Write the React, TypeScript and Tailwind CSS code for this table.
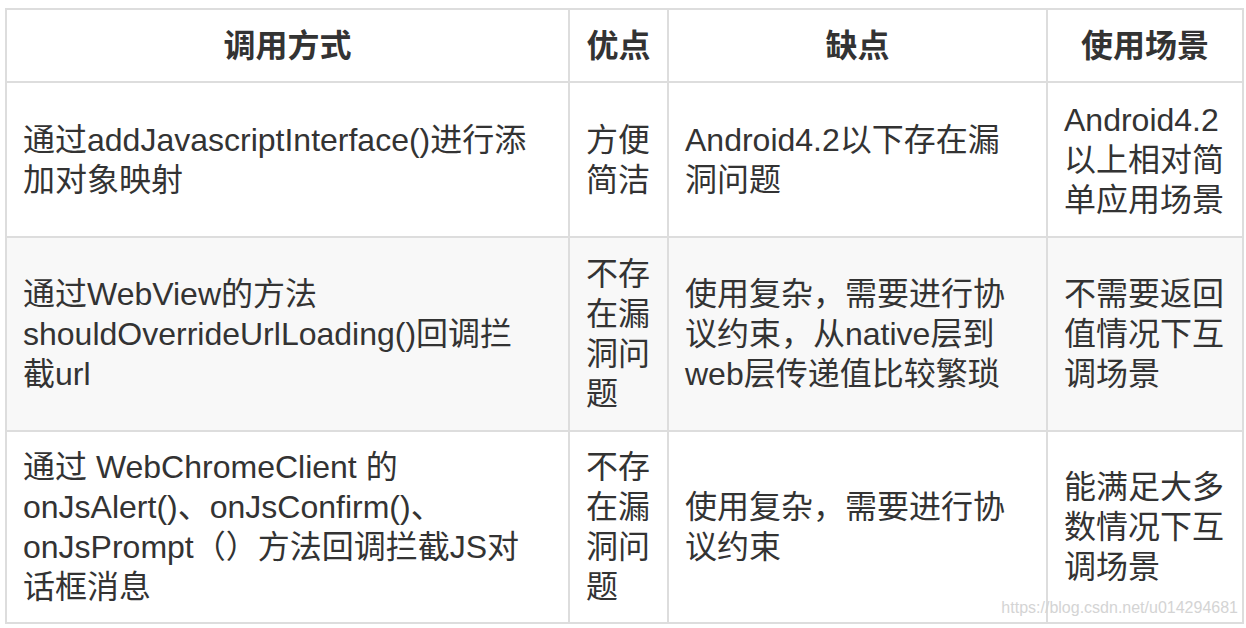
export default function App() {
  const font = { fontFamily: '"Liberation Sans", "Noto Sans CJK SC", sans-serif' };

  const cell = "border-2 border-[#dddddd] px-[16px] py-0 align-middle leading-[40px] whitespace-nowrap";

  return (
    <div className="relative h-[628px] w-[1246px] overflow-hidden bg-white" style={font}>
      <div className="pl-[5px] pt-[8px]">
        <table className="w-[1237px] table-fixed border-collapse text-[32px] text-[#333333]">
          <colgroup>
            <col className="w-[563px]" />
            <col className="w-[99px]" />
            <col className="w-[379px]" />
            <col className="w-[196px]" />
          </colgroup>
          <thead>
            <tr className="h-[73px]">
              <th className={`${cell} text-center font-bold`}>调用方式</th>
              <th className={`${cell} text-center font-bold`}>优点</th>
              <th className={`${cell} text-center font-bold`}>缺点</th>
              <th className={`${cell} text-center font-bold`}>使用场景</th>
            </tr>
          </thead>
          <tbody>
            <tr className="h-[155px]">
              <td className={cell}>
                通过addJavascriptInterface()进行添
                <br />
                加对象映射
              </td>
              <td className={cell}>
                方便
                <br />
                简洁
              </td>
              <td className={cell}>
                Android4.2以下存在漏
                <br />
                洞问题
              </td>
              <td className={cell}>
                Android4.2
                <br />
                以上相对简
                <br />
                单应用场景
              </td>
            </tr>
            <tr className="h-[194px] bg-[#f8f8f8]">
              <td className={cell}>
                通过WebView的方法
                <br />
                shouldOverrideUrlLoading()回调拦
                <br />
                截url
              </td>
              <td className={cell}>
                不存
                <br />
                在漏
                <br />
                洞问
                <br />
                题
              </td>
              <td className={cell}>
                使用复杂，需要进行协
                <br />
                议约束，从native层到
                <br />
                web层传递值比较繁琐
              </td>
              <td className={cell}>
                不需要返回
                <br />
                值情况下互
                <br />
                调场景
              </td>
            </tr>
            <tr className="h-[192px]">
              <td className={cell}>
                通过 WebChromeClient 的
                <br />
                onJsAlert()、onJsConfirm()、
                <br />
                onJsPrompt（）方法回调拦截JS对
                <br />
                话框消息
              </td>
              <td className={cell}>
                不存
                <br />
                在漏
                <br />
                洞问
                <br />
                题
              </td>
              <td className={cell}>
                使用复杂，需要进行协
                <br />
                议约束
              </td>
              <td className={cell}>
                能满足大多
                <br />
                数情况下互
                <br />
                调场景
              </td>
            </tr>
          </tbody>
        </table>
      </div>

      {/* watermark */}
      <div className="absolute right-[8px] top-[598px] text-[16px] leading-[20px] text-[#d4d4d4]">
        https://blog.csdn.net/u014294681
      </div>
    </div>
  );
}
